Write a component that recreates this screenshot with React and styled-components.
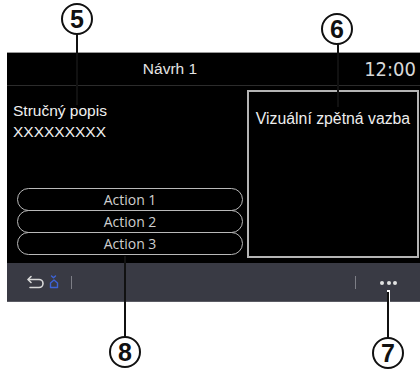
import React from "react";
import styled, { createGlobalStyle } from "styled-components";

const Global = createGlobalStyle`
  html, body { margin: 0; padding: 0; background: #fff; }
  body { font-family: "Liberation Sans", Arial, sans-serif; }
`;

const Page = styled.div`
  position: relative;
  width: 420px;
  height: 371px;
  background: #fff;
  overflow: hidden;
  padding-top: 52px;
  box-sizing: border-box;
`;

const Screen = styled.div`
  margin-left: 7px;
  width: 413px;
  height: 250px;
  background: #000;
  border-top: 1px solid #9a9a9a;
  box-sizing: border-box;
  display: flex;
  flex-direction: column;
`;

const Header = styled.div`
  height: 33px;
  display: flex;
  align-items: center;
  border-bottom: 1px solid #2c2c2c;
  box-sizing: border-box;
`;

const Title = styled.div`
  flex: 0 0 326px;
  text-align: center;
  color: #e4e4e4;
  font-size: 15.5px;
`;

const Clock = styled.div`
  flex: 1;
  text-align: right;
  padding-right: 4px;
  color: #d8d8d8;
  font-family: "Liberation Sans Narrow", "DejaVu Sans Condensed", "Liberation Sans", sans-serif;
  font-size: 20px;
`;

const Content = styled.div`
  flex: 1;
  display: grid;
  grid-template-columns: 240px 1fr;
`;

const LeftCol = styled.div`
  display: flex;
  flex-direction: column;
  padding: 14px 4px 8px 6px;
`;

const Desc = styled.div`
  color: #f0f0f0;
  font-size: 15.5px;
  line-height: 21px;
`;

const Actions = styled.div`
  margin-top: auto;
  margin-left: 4px;
  display: flex;
  flex-direction: column;
`;

const ActionBtn = styled.div`
  height: 23px;
  margin-top: ${(p) => (p.$first ? 0 : "-1px")};
  border: 1.5px solid #b9b9b9;
  border-radius: 12px;
  box-sizing: border-box;
  display: flex;
  align-items: center;
  justify-content: center;
  color: #cfcfcf;
  font-family: "Open Sans", "Noto Sans", sans-serif;
  font-size: 14px;
`;

const Feedback = styled.div`
  margin: 4px 1px 5px 0;
  border: 2px solid #b4b4b4;
  box-sizing: border-box;
  color: #eeeeee;
  font-size: 15.8px;
  white-space: nowrap;
  text-align: center;
  padding-top: 18px;
`;

const Toolbar = styled.div`
  height: 39px;
  background: #393a44;
  border-bottom: 1px solid #5a5b63;
  box-sizing: border-box;
  display: flex;
  align-items: center;
  padding: 0 0 0 19px;
`;

const Sep = styled.div`
  width: 1px;
  height: 13px;
  background: #7d7e86;
  margin: ${(p) => p.$m};
`;

const Spacer = styled.div`
  flex: 1;
`;

const Dots = styled.div`
  display: flex;
  gap: 2.5px;
  margin-right: 23px;
  margin-top: 2px;
`;

const Dot = styled.span`
  width: 4px;
  height: 4px;
  border-radius: 50%;
  background: #e2e2e2;
`;

const Callout = styled.div`
  position: absolute;
  left: ${(p) => p.$x - 16}px;
  top: ${(p) => p.$y - 16}px;
  width: 32px;
  height: 32px;
  border: 2px solid #111;
  border-radius: 50%;
  box-sizing: border-box;
  background: #fff;
  display: flex;
  align-items: center;
  justify-content: center;
  font-family: "Liberation Sans", Arial, sans-serif;
  font-weight: bold;
  font-size: 25px;
  color: #111;
  z-index: 2;
`;

const Leader = styled.div`
  position: absolute;
  left: ${(p) => p.$x - 1}px;
  top: ${(p) => p.$y1}px;
  height: ${(p) => p.$y2 - p.$y1}px;
  width: 2px;
  background: #111;
  z-index: 1;
`;

const LeaderLight = styled(Leader)`
  background: #fff;
  width: 3px;
`;

function BackIcon() {
  return (
    <svg width="20" height="14" viewBox="0 0 20 14" fill="none">
      <path d="M5 1.5 L2 4.5 L5 7.5" stroke="#d8d8d8" strokeWidth="1.6" strokeLinecap="round" strokeLinejoin="round" />
      <path d="M2.5 4.5 H13 A4 4 0 0 1 13 12.5 H4" stroke="#d8d8d8" strokeWidth="1.6" strokeLinecap="round" />
    </svg>
  );
}

function HomeIcon() {
  return (
    <svg width="10" height="14" viewBox="0 0 10 14" fill="none" style={{ marginLeft: 3 }}>
      <path d="M2.5 1 L4.5 2.8 L6.5 1" stroke="#3d63d6" strokeWidth="1.4" strokeLinecap="round" strokeLinejoin="round" />
      <path d="M1.5 12.5 V8 L5 5 L8.5 8 V12.5 Z" stroke="#3d63d6" strokeWidth="1.4" strokeLinejoin="round" />
    </svg>
  );
}

export default function App() {
  return (
    <>
      <Global />
      <Page>
        <Screen>
          <Header>
            <Title>Návrh 1</Title>
            <Clock>12:00</Clock>
          </Header>
          <Content>
            <LeftCol>
              <Desc>
                Stručný popis
                <br />
                XXXXXXXXX
              </Desc>
              <Actions>
                <ActionBtn $first>Action 1</ActionBtn>
                <ActionBtn>Action 2</ActionBtn>
                <ActionBtn>Action 3</ActionBtn>
              </Actions>
            </LeftCol>
            <Feedback>Vizuální zpětná vazba</Feedback>
          </Content>
          <Toolbar>
            <BackIcon />
            <HomeIcon />
            <Sep $m="0 0 0 12px" />
            <Spacer />
            <Sep $m="0 24px 0 0" />
            <Dots>
              <Dot />
              <Dot />
              <Dot />
            </Dots>
          </Toolbar>
        </Screen>

        <Leader $x={77} $y1={34} $y2={105} />
        <Callout $x={77} $y={19}>5</Callout>
        <Leader $x={338} $y1={44} $y2={107} />
        <Callout $x={337} $y={29}>6</Callout>
        <Leader $x={125} $y1={256} $y2={337} />
        <Callout $x={125} $y={352}>8</Callout>
        <LeaderLight $x={388} $y1={290} $y2={302} />
        <Leader $x={388} $y1={292} $y2={338} />
        <Callout $x={388} $y={353}>7</Callout>
      </Page>
    </>
  );
}
